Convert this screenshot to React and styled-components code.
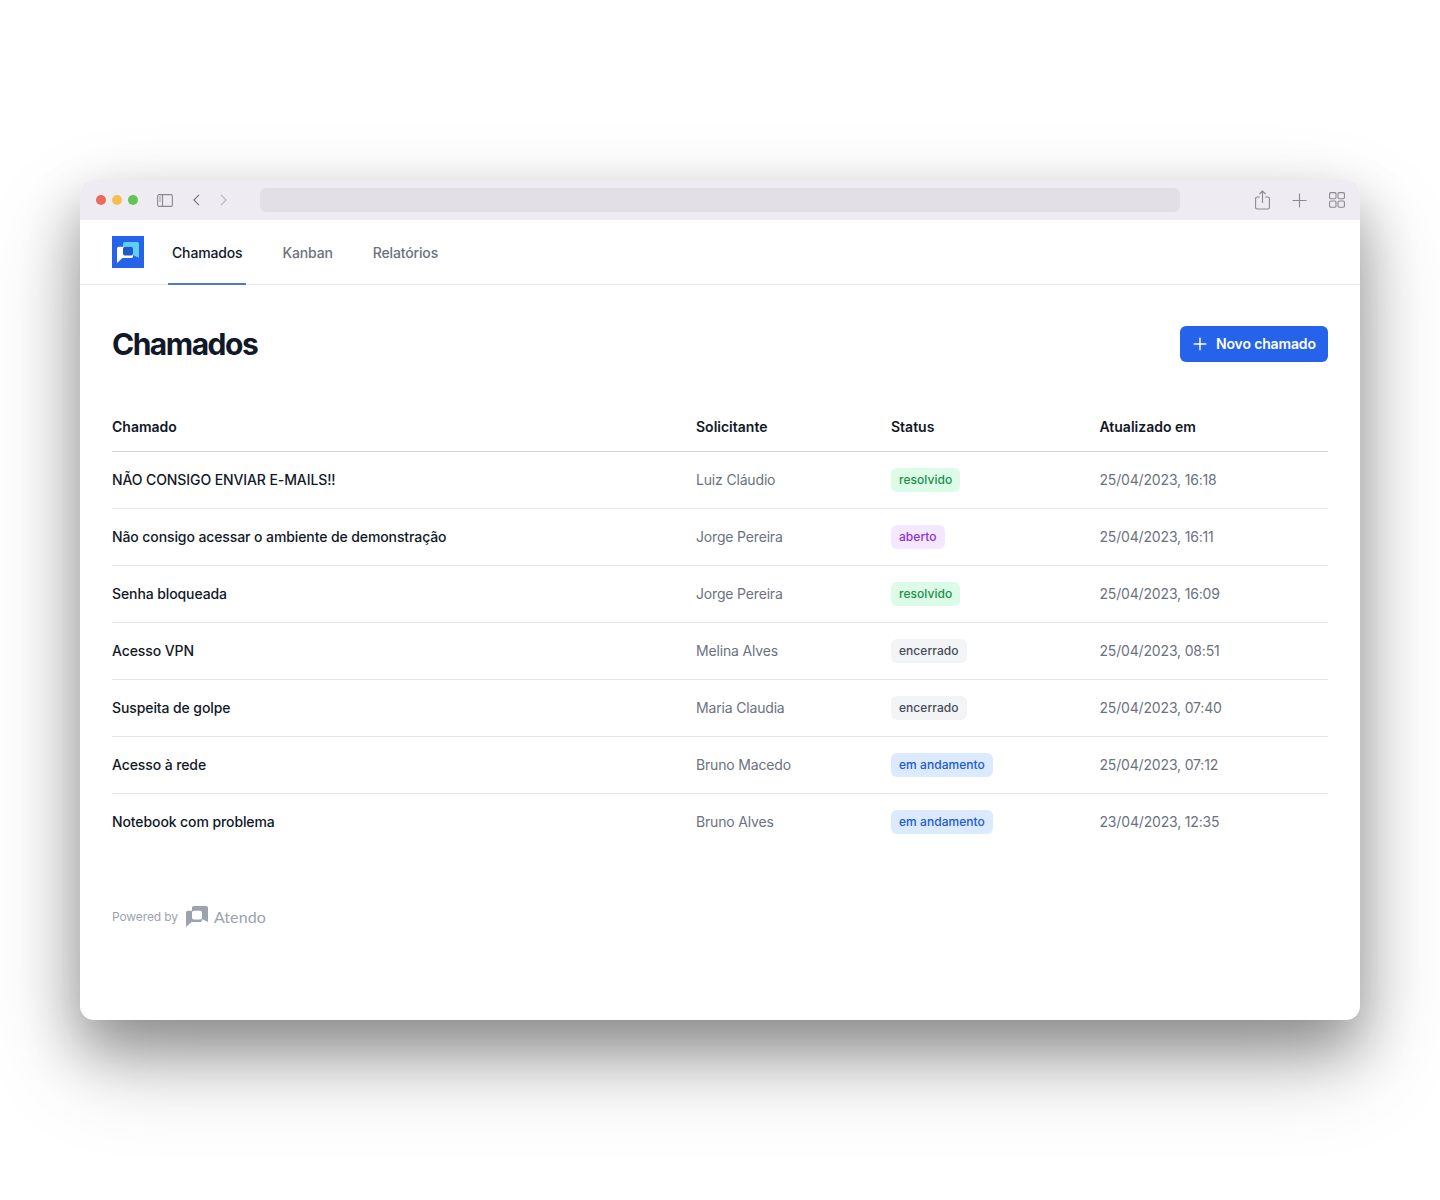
import React from 'react'
import styled, { createGlobalStyle } from 'styled-components'
import { Plus } from 'lucide-react'

const GlobalStyle = createGlobalStyle`
    html, body {
        margin: 0;
        padding: 0;
        background: #fff;
        font-family: Inter, "Liberation Sans", sans-serif;
    }
    * {
        box-sizing: border-box;
    }
`

const tickets = [
    { title: 'NÃO CONSIGO ENVIAR E-MAILS!!', from: 'Luiz Cláudio', status: 'resolvido', date: '25/04/2023, 16:18' },
    { title: 'Não consigo acessar o ambiente de demonstração', from: 'Jorge Pereira', status: 'aberto', date: '25/04/2023, 16:11' },
    { title: 'Senha bloqueada', from: 'Jorge Pereira', status: 'resolvido', date: '25/04/2023, 16:09' },
    { title: 'Acesso VPN', from: 'Melina Alves', status: 'encerrado', date: '25/04/2023, 08:51' },
    { title: 'Suspeita de golpe', from: 'Maria Claudia', status: 'encerrado', date: '25/04/2023, 07:40' },
    { title: 'Acesso à rede', from: 'Bruno Macedo', status: 'em andamento', date: '25/04/2023, 07:12' },
    { title: 'Notebook com problema', from: 'Bruno Alves', status: 'em andamento', date: '23/04/2023, 12:35' },
]

const badgeColors = {
    resolvido: ['#dcfce7', '#1a8f47'],
    aberto: ['#f3e8ff', '#8b30d8'],
    encerrado: ['#f3f4f6', '#444c5a'],
    'em andamento': ['#dbeafe', '#2059d9'],
}

function LogoMark({ back, front, center }) {
    return (
        <svg width="22" height="21" viewBox="0 0 22 21" fill="none">
            <path d="M6 1.800C6 .8 6.800 0 7.800 0h12.400c1 0 1.800.8 1.800 1.800V16l-5-2.500H6z" fill={back} />
            <path d="M0 6.500c0-1 .8-1.800 1.800-1.800h12.400c1 0 1.800.8 1.800 1.800v7.700c0 1-.8 1.800-1.800 1.800H5.500L0 21z" fill={front} />
            <rect x="6" y="4.700" width="10" height="8.800" rx="2" fill={center} />
        </svg>
    )
}

function App() {
    return (
        <>
            <GlobalStyle />
            <Page>
                <Window>
                    <Toolbar>
                        <Lights>
                            <Light color="#ed6a5e" />
                            <Light color="#f5bf4f" />
                            <Light color="#61c554" />
                        </Lights>
                        <ToolIcon width="16" height="13" viewBox="0 0 16 13">
                            <rect x="0.600" y="0.600" width="14.800" height="11.800" rx="1.500" />
                            <path d="M5.500 .6v11.800M2.200 3h1.600M2.200 5h1.600M2.200 7h1.600" />
                        </ToolIcon>
                        <ChevronLeft width="7" height="12" viewBox="0 0 7 12">
                            <path d="M6 .8.9 6 6 11.200" />
                        </ChevronLeft>
                        <ChevronRight width="7" height="12" viewBox="0 0 7 12">
                            <path d="M1 .8 6.100 6 1 11.200" />
                        </ChevronRight>
                        <AddressBar />
                        <ToolGroup>
                            <ToolIcon width="15" height="20" viewBox="0 0 15 20">
                                <path d="M4.800 7H2.200C1.200 7 .6 7.700 .6 8.600v8.800c0 .9.6 1.600 1.600 1.600h10.600c1 0 1.600-.7 1.600-1.600V8.600c0-.9-.6-1.600-1.600-1.600h-2.600" />
                                <path d="M7.500 13V1M4.500 4l3-3 3 3" />
                            </ToolIcon>
                            <ToolIcon width="15" height="15" viewBox="0 0 15 15">
                                <path d="M7.500.5v14M.5 7.500h14" />
                            </ToolIcon>
                            <ToolIcon width="16" height="16" viewBox="0 0 16 16">
                                <rect x="0.600" y="0.600" width="6.400" height="6.200" rx="1.200" />
                                <rect x="9" y="0.600" width="6.400" height="6.200" rx="1.200" />
                                <rect x="0.600" y="9" width="6.400" height="6.200" rx="1.200" />
                                <rect x="9" y="9" width="6.400" height="6.200" rx="1.200" />
                            </ToolIcon>
                        </ToolGroup>
                    </Toolbar>

                    <Nav>
                        <Logo>
                            <LogoMark back="#5ed0f8" front="#ffffff" center="#2058cf" />
                        </Logo>
                        <Tabs>
                            <Tab active>Chamados</Tab>
                            <Tab>Kanban</Tab>
                            <Tab>Relatórios</Tab>
                        </Tabs>
                    </Nav>

                    <Main>
                        <Heading>
                            <Title>Chamados</Title>
                            <NewButton>
                                <Plus size={20} strokeWidth={1.75} />
                                <ButtonLabel>Novo chamado</ButtonLabel>
                            </NewButton>
                        </Heading>

                        <Table>
                            <HeadRow>
                                <span>Chamado</span>
                                <span>Solicitante</span>
                                <span>Status</span>
                                <span>Atualizado em</span>
                            </HeadRow>
                            {tickets.map((ticket) => (
                                <Row key={ticket.title}>
                                    <TicketTitle>{ticket.title}</TicketTitle>
                                    <Muted>{ticket.from}</Muted>
                                    <div>
                                        <Badge status={ticket.status}>{ticket.status}</Badge>
                                    </div>
                                    <Muted>{ticket.date}</Muted>
                                </Row>
                            ))}
                        </Table>

                        <Footer>
                            <PoweredBy>Powered by</PoweredBy>
                            <LogoMark back="#9ca3af" front="#9ca3af" center="#ffffff" />
                            <Brand>Atendo</Brand>
                        </Footer>
                    </Main>
                </Window>
            </Page>
        </>
    )
}

export default App

const Page = styled.div`
    width: 1440px;
    height: 1200px;
    padding: 180px 80px;
    overflow: hidden;
    background: #fff;
`
const Window = styled.div`
    width: 1280px;
    height: 840px;
    background: #fff;
    border-radius: 14px;
    overflow: hidden;
    box-shadow: 0 28px 56px rgba(0, 0, 0, 0.32), 0 42px 96px rgba(0, 0, 0, 0.22);
`
const Toolbar = styled.div`
    height: 40px;
    background: #efebf2;
    display: flex;
    align-items: center;
    padding: 0 15px 0 16px;
`
const Lights = styled.div`
    display: flex;
    gap: 6px;
    margin-right: 19px;
`
const Light = styled.span`
    width: 10px;
    height: 10px;
    border-radius: 50%;
    background: ${(props) => props.color};
`
const ToolIcon = styled.svg`
    fill: none;
    stroke: #8b898e;
    stroke-width: 1.1;
    flex: none;
`
const ChevronLeft = styled(ToolIcon)`
    margin-left: 20px;
    stroke: #77757a;
`
const ChevronRight = styled(ToolIcon)`
    margin-left: 20px;
    stroke: #b6b4b9;
`
const AddressBar = styled.div`
    width: 920px;
    height: 24px;
    margin-left: 33px;
    border-radius: 6px;
    background: #e3dfe7;
`
const ToolGroup = styled.div`
    display: flex;
    align-items: center;
    gap: 22px;
    margin-left: auto;
`
const Nav = styled.div`
    height: 65px;
    display: flex;
    align-items: stretch;
    padding: 0 32px;
    border-bottom: 1px solid #e5e7eb;
`
const Logo = styled.div`
    width: 32px;
    height: 32px;
    margin-top: 16px;
    background: #2563eb;
    display: flex;
    align-items: center;
    justify-content: center;
`
const Tabs = styled.div`
    display: flex;
    margin-left: 24px;
`
const Tab = styled.div`
    display: flex;
    align-items: center;
    height: 65px;
    padding: 2px 4px 0;
    margin-right: 32px;
    font-size: 14px;
    font-weight: 500;
    letter-spacing: -0.15px;
    color: ${(props) => (props.active ? '#111827' : '#6b7280')};
    border-bottom: 2px solid ${(props) => (props.active ? '#4a7cc9' : 'transparent')};
`
const Main = styled.div`
    padding: 41px 32px 0;
`
const Heading = styled.div`
    display: flex;
    align-items: center;
    justify-content: space-between;
    height: 36px;
`
const Title = styled.h1`
    margin: 0;
    font-size: 30px;
    line-height: 36px;
    font-weight: 700;
    letter-spacing: -1.5px;
    color: #111827;
`
const NewButton = styled.button`
    width: 148px;
    height: 36px;
    display: flex;
    align-items: center;
    gap: 6px;
    padding: 0 0 0 10px;
    border: 0;
    border-radius: 6px;
    background: #2563eb;
    color: #fff;
    font-family: inherit;
    font-size: 14px;
    font-weight: 600;
    letter-spacing: -0.15px;
`
const ButtonLabel = styled.span`
    margin-bottom: 2px;
`
const Table = styled.div`
    margin-top: 36px;
`
const columns = `
    display: grid;
    grid-template-columns: 584px 195px 208.5px 1fr;
    align-items: center;
`
const HeadRow = styled.div`
    ${columns}
    height: 54px;
    padding-top: 4px;
    border-bottom: 1px solid #d1d5db;
    font-size: 14px;
    font-weight: 600;
    color: #111827;
`
const Row = styled.div`
    ${columns}
    height: 57px;
    font-size: 14px;
    border-bottom: 1px solid #e5e7eb;
    &:last-child {
        border-bottom-color: transparent;
    }
`
const TicketTitle = styled.span`
    margin-bottom: 2px;
    font-weight: 500;
    letter-spacing: -0.1px;
    color: #111827;
`
const Muted = styled.span`
    margin-bottom: 2px;
    letter-spacing: -0.17px;
    color: #6b7280;
`
const Badge = styled.span`
    display: inline-block;
    padding: 0 8px;
    height: 24px;
    line-height: 24px;
    border-radius: 6px;
    font-size: 12px;
    font-weight: 500;
    letter-spacing: 0.05px;
    background: ${(props) => badgeColors[props.status][0]};
    color: ${(props) => badgeColors[props.status][1]};
`
const Footer = styled.div`
    display: flex;
    align-items: center;
    margin-top: 55px;
`
const PoweredBy = styled.span`
    font-size: 12px;
    letter-spacing: -0.12px;
    color: #9ca3af;
    margin-right: 8px;
`
const Brand = styled.span`
    font-size: 16px;
    font-weight: 400;
    letter-spacing: 0.1px;
    color: #9ca3af;
    margin-left: 6px;
    font-family: Lato, Inter, sans-serif;
`
